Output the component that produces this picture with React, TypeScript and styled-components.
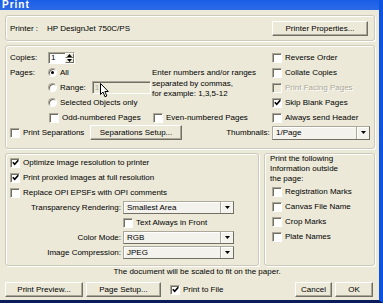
import React from 'react';
import styled, { createGlobalStyle } from 'styled-components';

const palette = {
  face: '#ece9d8',
  light: '#ffffff',
  shadow: '#aca899',
  dark: '#716f64',
  line: '#cdcabb',
  disabled: '#aca899',
  frame: '#0d53df',
};

const GlobalStyle = createGlobalStyle`
  body {
    margin: 0;
    font-family: "Liberation Sans", Arial, sans-serif;
    font-size: 8px;
    color: #000;
  }
`;

const Window = styled.div`
  width: 383px;
  height: 303px;
  box-sizing: border-box;
  display: flex;
  flex-direction: column;
  background: ${palette.face};
  border-right: 4px solid ${palette.frame};
  border-bottom: 3px solid #0b1c5a;
  overflow: hidden;
`;

const TitleBar = styled.div`
  height: 10px;
  flex-shrink: 0;
  background: linear-gradient(to bottom, #1a5ee6, #2b6ae8);
  padding-left: 2px;
`;

const Title = styled.div`
  font-size: 10px;
  line-height: 10px;
  letter-spacing: 1px;
  font-weight: bold;
  color: #fff;
`;

const Body = styled.div`
  display: flex;
  flex-direction: column;
  padding: 5px 4px 0 5px;
`;

const Group = styled.div<{ $h: number }>`
  height: ${(p) => p.$h}px;
  box-sizing: border-box;
  border: 1px solid ${palette.line};
  border-radius: 3px;
  box-shadow: inset 1px 1px 0 ${palette.light}, 1px 1px 0 ${palette.light};
`;

const PrinterGroup = styled(Group)`
  display: flex;
  align-items: center;
  padding: 0 0 0 4px;
`;

const PrinterLabel = styled.span`
  width: 37px;
`;

const Button = styled.button<{ $w: number }>`
  width: ${(p) => p.$w}px;
  height: 15px;
  flex-shrink: 0;
  padding: 0;
  margin: 0;
  font: inherit;
  color: #000;
  background: ${palette.face};
  border: 1px solid;
  border-color: ${palette.light} ${palette.dark} ${palette.dark} ${palette.light};
  box-shadow: inset -1px -1px 0 ${palette.shadow};
`;

const PropsButton = styled(Button)`
  margin-left: auto;
  margin-right: 6px;
`;

const MainGroup = styled(Group)`
  margin-top: 4px;
  padding: 4px 4px 0 4px;
  display: grid;
  grid-template-columns: 38px 104px 120px 98px;
  grid-template-rows: repeat(6, 15px);
`;

const Cell = styled.div<{ $c: string; $r: string; $justify?: string; $pad?: number }>`
  grid-column: ${(p) => p.$c};
  grid-row: ${(p) => p.$r};
  display: flex;
  align-items: center;
  justify-content: ${(p) => p.$justify ?? 'flex-start'};
  padding-left: ${(p) => p.$pad ?? 0}px;
  white-space: nowrap;
  min-width: 0;
`;

const Hint = styled.div`
  grid-column: 3;
  grid-row: 2 / 5;
  line-height: 10.5px;
  padding-top: 3px;
  white-space: nowrap;
`;

const CheckRow = styled.label<{ $disabled?: boolean }>`
  display: flex;
  align-items: center;
  gap: 3px;
  white-space: nowrap;
  color: ${(p) => (p.$disabled ? palette.disabled : '#000')};
  text-shadow: ${(p) => (p.$disabled ? `1px 1px 0 ${palette.light}` : 'none')};
`;

const Box = styled.span<{ $disabled?: boolean }>`
  width: 10px;
  height: 10px;
  box-sizing: border-box;
  flex-shrink: 0;
  display: inline-flex;
  align-items: center;
  justify-content: center;
  border: 1px solid;
  border-color: ${palette.shadow} ${palette.light} ${palette.light} ${palette.shadow};
  box-shadow: inset 1px 1px 0 ${palette.dark};
  background: ${(p) => (p.$disabled ? palette.face : '#fff')};
`;

const RadioDot = styled.span<{ $on?: boolean }>`
  width: 9px;
  height: 9px;
  box-sizing: border-box;
  flex-shrink: 0;
  border-radius: 50%;
  display: inline-flex;
  align-items: center;
  justify-content: center;
  border: 1px solid;
  border-color: ${palette.shadow} ${palette.light} ${palette.light} ${palette.shadow};
  box-shadow: inset 1px 1px 0 ${palette.dark};
  background: #fff;

  &::after {
    content: '';
    width: 3px;
    height: 3px;
    border-radius: 50%;
    background: #000;
    display: ${(p) => (p.$on ? 'block' : 'none')};
  }
`;

const Field = styled.div<{ $w: number; $h?: number; $disabled?: boolean }>`
  position: relative;
  width: ${(p) => p.$w}px;
  height: ${(p) => p.$h ?? 13}px;
  box-sizing: border-box;
  flex-shrink: 0;
  display: flex;
  align-items: center;
  padding-left: 2px;
  border: 1px solid;
  border-color: ${palette.shadow} ${palette.light} ${palette.light} ${palette.shadow};
  box-shadow: inset 1px 1px 0 ${palette.dark};
  background: ${(p) => (p.$disabled ? palette.face : '#fff')};
  color: ${(p) => (p.$disabled ? palette.disabled : '#000')};
`;

const SelectBox = styled.div<{ $w: number; $h?: number }>`
  width: ${(p) => p.$w}px;
  height: ${(p) => p.$h ?? 13}px;
  box-sizing: border-box;
  flex-shrink: 0;
  display: flex;
  align-items: center;
  padding-left: 3px;
  background: #f3f2ec;
  border: 1px solid;
  border-color: ${palette.shadow} ${palette.dark} ${palette.dark} ${palette.shadow};
  box-shadow: inset 1px 1px 0 ${palette.light};
`;

const SpinButtons = styled.div`
  margin-left: auto;
  width: 9px;
  height: 100%;
  display: flex;
  flex-direction: column;
`;

const SpinHalf = styled.span`
  flex: 1;
  display: flex;
  align-items: center;
  justify-content: center;
  background: ${palette.face};
  border: 1px solid;
  border-color: ${palette.light} ${palette.dark} ${palette.dark} ${palette.light};
`;

const DropButton = styled.span`
  margin-left: auto;
  width: 12px;
  height: 100%;
  box-sizing: border-box;
  display: flex;
  align-items: center;
  justify-content: center;
  border-left: 1px solid ${palette.light};
  box-shadow: -1px 0 0 ${palette.shadow};
`;

const Cursor = styled.svg`
  position: absolute;
  left: 7px;
  top: 1px;
`;

const RadioRow = styled.div`
  display: flex;
  align-items: center;
  gap: 3px;
`;

const RangeInput = styled(Field)`
  margin-left: 6px;
`;

const SepRow = styled.div`
  display: grid;
  grid-template-columns: 80px auto;
  align-items: center;
`;

const LowerRow = styled.div`
  margin-top: 4px;
  display: flex;
  gap: 5px;
`;

const OutputGroup = styled(Group)`
  width: 254px;
  flex-shrink: 0;
  padding: 1px 4px 0 4px;
  display: grid;
  grid-template-columns: 111px 111px;
  column-gap: 2px;
  grid-template-rows: repeat(7, 15px);
`;

const MarksGroup = styled(Group)`
  flex: 1;
  padding: 0 0 0 5px;
  display: flex;
  flex-direction: column;
`;

const MarksIntro = styled.div`
  line-height: 10px;
  height: 30px;
`;

const MarksList = styled.div`
  display: grid;
  grid-template-rows: repeat(4, 15px);
  align-items: center;
  padding-left: 2px;
`;

const Note = styled.div`
  height: 12px;
  line-height: 12px;
  text-align: center;
  padding-left: 14px;
`;

const ButtonRow = styled.div`
  margin-top: 4px;
  padding-right: 2px;
  display: flex;
  align-items: center;
  gap: 3px;
`;

const FileCheck = styled.div`
  margin-left: 6px;
  flex: 1;
`;

const Tick = () => (
  <svg width="7" height="7" viewBox="0 0 7 7">
    <path d="M0.8 3.2 L2.7 5.2 L6.3 1.2" fill="none" stroke="#000" strokeWidth="1.6" />
  </svg>
);

const Check = ({ label, checked, disabled }: { label: string; checked?: boolean; disabled?: boolean }) => (
  <CheckRow $disabled={disabled}>
    <Box $disabled={disabled}>{checked && <Tick />}</Box>
    <span>{label}</span>
  </CheckRow>
);

const Radio = ({ label, on }: { label: string; on?: boolean }) => (
  <RadioRow>
    <RadioDot $on={on} />
    <span>{label}</span>
  </RadioRow>
);

const Arrow = ({ up }: { up?: boolean }) => (
  <svg width="5" height="3" viewBox="0 0 5 3">
    <path d={up ? 'M0 3 L2.5 0 L5 3 Z' : 'M0 0 L5 0 L2.5 3 Z'} fill="#000" />
  </svg>
);

const Select = ({ value, w, h }: { value: string; w: number; h?: number }) => (
  <SelectBox $w={w} $h={h}>
    <span>{value}</span>
    <DropButton>
      <Arrow />
    </DropButton>
  </SelectBox>
);

const App = () => {
  return (
    <>
      <GlobalStyle />
      <Window>
        <TitleBar>
          <Title>Print</Title>
        </TitleBar>
        <Body>
          <PrinterGroup $h={26}>
            <PrinterLabel>Printer :</PrinterLabel>
            <span>HP DesignJet 750C/PS</span>
            <PropsButton $w={96}>Printer Properties...</PropsButton>
          </PrinterGroup>

          <MainGroup $h={104}>
            <Cell $c="1" $r="1">Copies:</Cell>
            <Cell $c="2" $r="1">
              <Field $w={27} $h={12}>
                <span>1</span>
                <SpinButtons>
                  <SpinHalf><Arrow up /></SpinHalf>
                  <SpinHalf><Arrow /></SpinHalf>
                </SpinButtons>
              </Field>
            </Cell>
            <Cell $c="4" $r="1"><Check label="Reverse Order" /></Cell>

            <Cell $c="1" $r="2">Pages:</Cell>
            <Cell $c="2" $r="2"><Radio label="All" on /></Cell>
            <Hint>
              Enter numbers and/or ranges
              <br />
              separated by commas,
              <br />
              for example: 1,3,5-12
            </Hint>
            <Cell $c="4" $r="2"><Check label="Collate Copies" /></Cell>

            <Cell $c="2" $r="3">
              <Radio label="Range:" />
              <RangeInput $w={59} $disabled>
                <span>1</span>
                <Cursor width="10" height="15" viewBox="0 0 10 15">
                  <path d="M0.5 0.5 L0.5 11.5 L3 9 L5 13.8 L6.8 13 L4.9 8.5 L8.3 8.5 Z" fill="#fff" stroke="#000" strokeWidth="1" />
                </Cursor>
              </RangeInput>
            </Cell>
            <Cell $c="4" $r="3"><Check label="Print Facing Pages" disabled /></Cell>

            <Cell $c="2" $r="4"><Radio label="Selected Objects only" /></Cell>
            <Cell $c="4" $r="4"><Check label="Skip Blank Pages" checked /></Cell>

            <Cell $c="2" $r="5" $pad={1}><Check label="Odd-numbered Pages" /></Cell>
            <Cell $c="3" $r="5" $pad={1}><Check label="Even-numbered Pages" /></Cell>
            <Cell $c="4" $r="5"><Check label="Always send Header" /></Cell>

            <Cell $c="1 / 3" $r="6">
              <SepRow>
                <Check label="Print Separations" />
                <Button $w={92}>Separations Setup...</Button>
              </SepRow>
            </Cell>
            <Cell $c="3" $r="6" $justify="flex-end">Thumbnails:&nbsp;</Cell>
            <Cell $c="4" $r="6">
              <Select value="1/Page" w={98} h={14} />
            </Cell>
          </MainGroup>

          <LowerRow>
            <OutputGroup $h={113}>
              <Cell $c="1 / 3" $r="1"><Check label="Optimize image resolution to printer" checked /></Cell>
              <Cell $c="1 / 3" $r="2"><Check label="Print proxied images at full resolution" checked /></Cell>
              <Cell $c="1 / 3" $r="3"><Check label="Replace OPI EPSFs with OPI comments" /></Cell>
              <Cell $c="1" $r="4" $justify="flex-end">Transparency Rendering:</Cell>
              <Cell $c="2" $r="4"><Select value="Smallest Area" w={111} /></Cell>
              <Cell $c="2" $r="5"><Check label="Text Always in Front" /></Cell>
              <Cell $c="1" $r="6" $justify="flex-end">Color Mode:</Cell>
              <Cell $c="2" $r="6"><Select value="RGB" w={111} /></Cell>
              <Cell $c="1" $r="7" $justify="flex-end">Image Compression:</Cell>
              <Cell $c="2" $r="7"><Select value="JPEG" w={111} /></Cell>
            </OutputGroup>

            <MarksGroup $h={113}>
              <MarksIntro>
                Print the following
                <br />
                Information outside
                <br />
                the page:
              </MarksIntro>
              <MarksList>
                <Check label="Registration Marks" />
                <Check label="Canvas File Name" />
                <Check label="Crop Marks" />
                <Check label="Plate Names" />
              </MarksList>
            </MarksGroup>
          </LowerRow>

          <Note>The document will be scaled to fit on the paper.</Note>

          <ButtonRow>
            <Button $w={78}>Print Preview...</Button>
            <Button $w={75}>Page Setup...</Button>
            <FileCheck>
              <Check label="Print to File" checked />
            </FileCheck>
            <Button $w={37}>Cancel</Button>
            <Button $w={38}>OK</Button>
          </ButtonRow>
        </Body>
      </Window>
    </>
  );
};

export default App;
